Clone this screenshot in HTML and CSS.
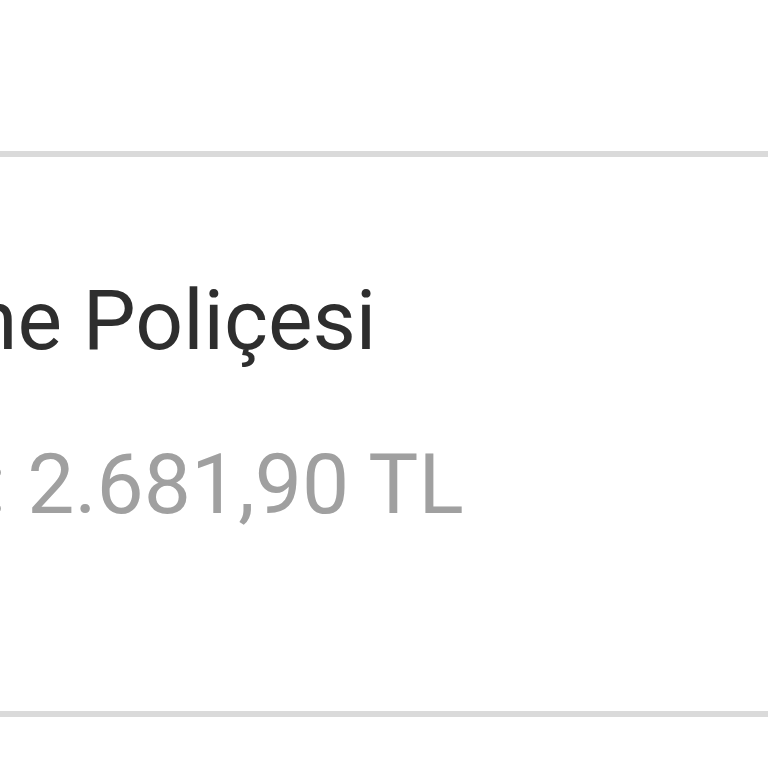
FILE: index.html
```html
<!DOCTYPE html>
<html lang="tr">
<head>
<meta charset="utf-8">
<link rel="stylesheet" href="styles.css">
</head>
<body>
<div class="top"></div>
<section class="card">
  <div class="title"><span class="cut-title">ne Poliçesi</span></div>
  <div class="price"><span class="cut-price">: 2.681,90 TL</span></div>
</section>
</body>
</html>
```
FILE: styles.css
```css
html, body {
  margin: 0;
  padding: 0;
  background: #ffffff;
  width: 768px;
  height: 768px;
  overflow: hidden;
}
.top {
  height: 151px;
}
.card {
  border-top: 6px solid #dadada;
  border-bottom: 6px solid #dadada;
  padding: 114px 0 176px 0;
  font-family: Roboto, "Noto Sans", sans-serif;
  font-size: 84px;
  line-height: 100px;
  overflow: hidden;
}
.title {
  color: #2e2e2e;
  white-space: nowrap;
  height: 100px;
}
.cut-title {
  display: inline-block;
  margin-left: -29px;
}
.price {
  margin-top: 64px;
  color: #a0a0a0;
  white-space: nowrap;
  height: 100px;
}
.cut-price {
  display: inline-block;
  margin-left: -14px;
}
```
